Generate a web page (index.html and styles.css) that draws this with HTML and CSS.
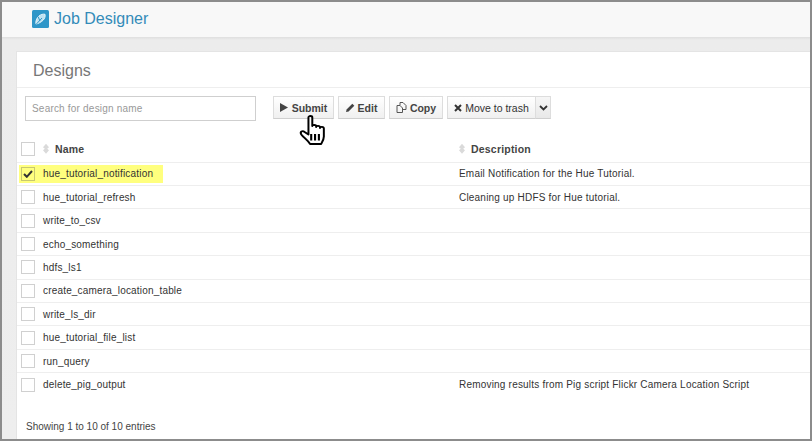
FILE: index.html
```html
<!DOCTYPE html>
<html lang="en">
<head>
<meta charset="utf-8">
<title>Job Designer</title>
<link rel="stylesheet" href="styles.css">
</head>
<body>
<div class="frame">
  <header class="topbar">
    <svg class="logo" width="17" height="18" viewBox="0 0 17 18"><rect width="17" height="18" rx="1.5" fill="#2f96c8"/><path d="M4 14.200c-.6-2.800.5-6 3-8.200 1.800-1.500 4-2.200 6-1.700.5 2-.2 4.300-2 6-2 2-4.500 3-7 3.900z" fill="#bfe2f1" stroke="#e6f4fa" stroke-width="1"/><path d="M3.500 15 10 8M6 6.500 8 11" stroke="#2f96c8" stroke-width="1"/></svg>
    <span class="app-title">Job Designer</span>
  </header>
  <main class="band">
    <section class="card">
      <h1 class="card-title">Designs</h1>
      <div class="toolbar">
        <input class="search" type="text" placeholder="Search for design name">
        <div class="actions">
          <button class="btn btn-submit"><svg width="8" height="9" viewBox="0 0 8 9"><path d="M0 0l8 4.500L0 9z" fill="#444"/></svg>Submit</button>
          <button class="btn btn-edit"><svg width="9" height="9" viewBox="0 0 9 9"><path d="M0 9l.6-2.600L6.300.7l2 2L2.600 8.400z" fill="#444"/></svg>Edit</button>
          <button class="btn btn-copy"><svg width="11" height="11" viewBox="0 0 11 11" fill="none" stroke="#555"><path d="M4 .5h3l3 3v4H7M4 .5V3.500M1 3.500h3l2.500 2.500v4.500H1z"/></svg>Copy</button>
          <div class="split">
            <button class="btn btn-trash"><svg width="8" height="8" viewBox="0 0 8 8"><path d="M1 1l6 6M7 1L1 7" stroke="#333" stroke-width="2"/></svg>Move to trash</button>
            <button class="btn btn-caret"><svg width="9" height="6" viewBox="0 0 9 6"><path d="M1 1l3.500 3.500L8 1" fill="none" stroke="#333" stroke-width="1.800"/></svg></button>
          </div>
        </div>
      </div>
      <div class="thead">
        <div class="cell-check"><span class="box"></span></div>
        <div class="cell-name"><span class="sort"></span>Name</div>
        <div class="cell-desc"><span class="sort"></span>Description</div>
      </div>
      <div class="row row-marked">
        <div class="cell-check"><span class="box checked"><svg width="10" height="8" viewBox="0 0 10 8"><path d="M1 4l2.800 2.800L9 1" fill="none" stroke="#333" stroke-width="2"/></svg></span></div>
        <div class="cell-name">hue_tutorial_notification</div>
        <div class="cell-desc">Email Notification for the Hue Tutorial.</div>
      </div>
      <div class="row">
        <div class="cell-check"><span class="box"></span></div>
        <div class="cell-name">hue_tutorial_refresh</div>
        <div class="cell-desc">Cleaning up HDFS for Hue tutorial.</div>
      </div>
      <div class="row"><div class="cell-check"><span class="box"></span></div><div class="cell-name">write_to_csv</div><div class="cell-desc"></div></div>
      <div class="row"><div class="cell-check"><span class="box"></span></div><div class="cell-name">echo_something</div><div class="cell-desc"></div></div>
      <div class="row"><div class="cell-check"><span class="box"></span></div><div class="cell-name">hdfs_ls1</div><div class="cell-desc"></div></div>
      <div class="row"><div class="cell-check"><span class="box"></span></div><div class="cell-name">create_camera_location_table</div><div class="cell-desc"></div></div>
      <div class="row"><div class="cell-check"><span class="box"></span></div><div class="cell-name">write_ls_dir</div><div class="cell-desc"></div></div>
      <div class="row"><div class="cell-check"><span class="box"></span></div><div class="cell-name">hue_tutorial_file_list</div><div class="cell-desc"></div></div>
      <div class="row"><div class="cell-check"><span class="box"></span></div><div class="cell-name">run_query</div><div class="cell-desc"></div></div>
      <div class="row last">
        <div class="cell-check"><span class="box"></span></div>
        <div class="cell-name">delete_pig_output</div>
        <div class="cell-desc">Removing results from Pig script Flickr Camera Location Script</div>
      </div>
      <p class="info">Showing 1 to 10 of 10 entries</p>
    </section>
  </main>
  <svg class="cursor" width="33" height="33" viewBox="0 0 30 33" preserveAspectRatio="none"><path d="M9.500 2.500c0-2 3.500-2 3.500 0V11c0-1.500 3.500-1.500 3.500 0v1c0-1.500 3.500-1.500 3.500.3v.7c0-1.500 3.500-1.500 3.500.5v8c0 3-1 4.500-2.500 7.500H11c-2-3.500-5.500-6-8-9.500-1.500-2.500 1-4.500 3-2.500L9.500 19.500z" fill="#fff" stroke="#000" stroke-width="1.800" stroke-linejoin="round"/><path d="M12 19v6.500M15.500 19v6.500M19 19v6.500" stroke="#000" stroke-width="1.900"/></svg>
</div>
</body>
</html>
```
FILE: styles.css
```css
* { box-sizing: border-box; }
html, body { margin: 0; height: 100%; }
body { font-family: "Liberation Sans", Arial, sans-serif; background: #fff; overflow: hidden; }
.frame {
  position: relative;
  width: 812px; height: 441px;
  border: 2px solid #8c8c8c;
  display: flex; flex-direction: column;
  overflow: hidden;
}
.topbar {
  height: 35px; flex: none;
  background: #f8f8f8;
  display: flex; align-items: center; gap: 5px;
  padding: 0 0 1px 30px;
}
.logo { flex: none; }
.app-title { font-size: 16px; color: #338bb8; }
.band {
  flex: 1; padding: 14px 0 0 14px; display: flex; min-height: 0;
  background: linear-gradient(#dfdfdf, #ececec 3px, #eeeeee);
}
.card {
  flex: 1; background: #fff;
  border-top: 1px solid #e4e4e4; border-left: 1px solid #e4e4e4;
  display: flex; flex-direction: column;
  min-width: 0;
}
.card-title {
  margin: 0; height: 36px; line-height: 37px;
  font-size: 16px; font-weight: normal; color: #777;
  padding-left: 16px;
  border-bottom: 1px solid #eeeeee;
  flex: none;
}
.toolbar { display: flex; padding: 8px 0 0 8px; height: 48px; flex: none; }
.search {
  width: 231px; height: 25px;
  border: 1px solid #cfcfcf;
  padding: 0 6px;
  font: 10px "Liberation Sans", Arial, sans-serif;
  background: #fff;
  margin: 0 17px 0 0;
  outline: none; letter-spacing: 0.2px;
}
.search::placeholder { color: #999; opacity: 1; }
.actions { display: flex; gap: 4px; align-items: flex-start; }
.split { display: flex; }
.btn {
  height: 23px; padding: 0;
  border: 1px solid #dddddd; border-bottom-color: #cfcfcf;
  background: linear-gradient(#ffffff, #f0f0f0);
  font: bold 10.5px "Liberation Sans", Arial, sans-serif;
  color: #444;
  display: flex; align-items: center; justify-content: center; gap: 3px;
}
.btn-submit { width: 61px; gap: 4px; }
.btn-edit { width: 47px; }
.btn-copy { width: 54px; }
.btn-trash { width: 88px; font-weight: normal; color: #333; border-right: 0; }
.btn-caret { width: 16px; background: linear-gradient(#f6f6f6, #e8e8e8); }
.thead, .row {
  display: flex; align-items: center; flex: none;
  border-bottom: 1px solid #eeeeee;
  font-size: 10px; color: #333;
}
.thead { height: 26.7px; font-weight: bold; font-size: 10.5px; color: #444; }
.row { height: 23.4px; }
.row.last { border-bottom: 0; }
.row-marked {
  background: linear-gradient(#ffff7e, #ffff7e) 2px 2px / 144px 18px no-repeat;
}
.cell-check { width: 26px; flex: none; padding-left: 4px; display: flex; }
.cell-name { width: 416px; flex: none; letter-spacing: 0.18px; display: flex; align-items: center; white-space: nowrap; }
.cell-desc { flex: 1; display: flex; align-items: center; letter-spacing: 0.2px; white-space: nowrap; }
.box { width: 14px; height: 14px; border: 1px solid #d0d0d0; background: #fff; display: flex; align-items: center; justify-content: center; }
.box.checked { background: #ffff7e; border-color: #c8c870; }
.sort {
  width: 6px; height: 10px; margin-right: 6px; flex: none;
  background: #dadada;
  clip-path: polygon(50% 0, 100% 35%, 70% 50%, 100% 65%, 50% 100%, 0 65%, 30% 50%, 0 35%);
}
.info { margin: 24.3px 0 0 9px; font-size: 10px; color: #444; }
.cursor { position: absolute; left: 296px; top: 113px; }
```
